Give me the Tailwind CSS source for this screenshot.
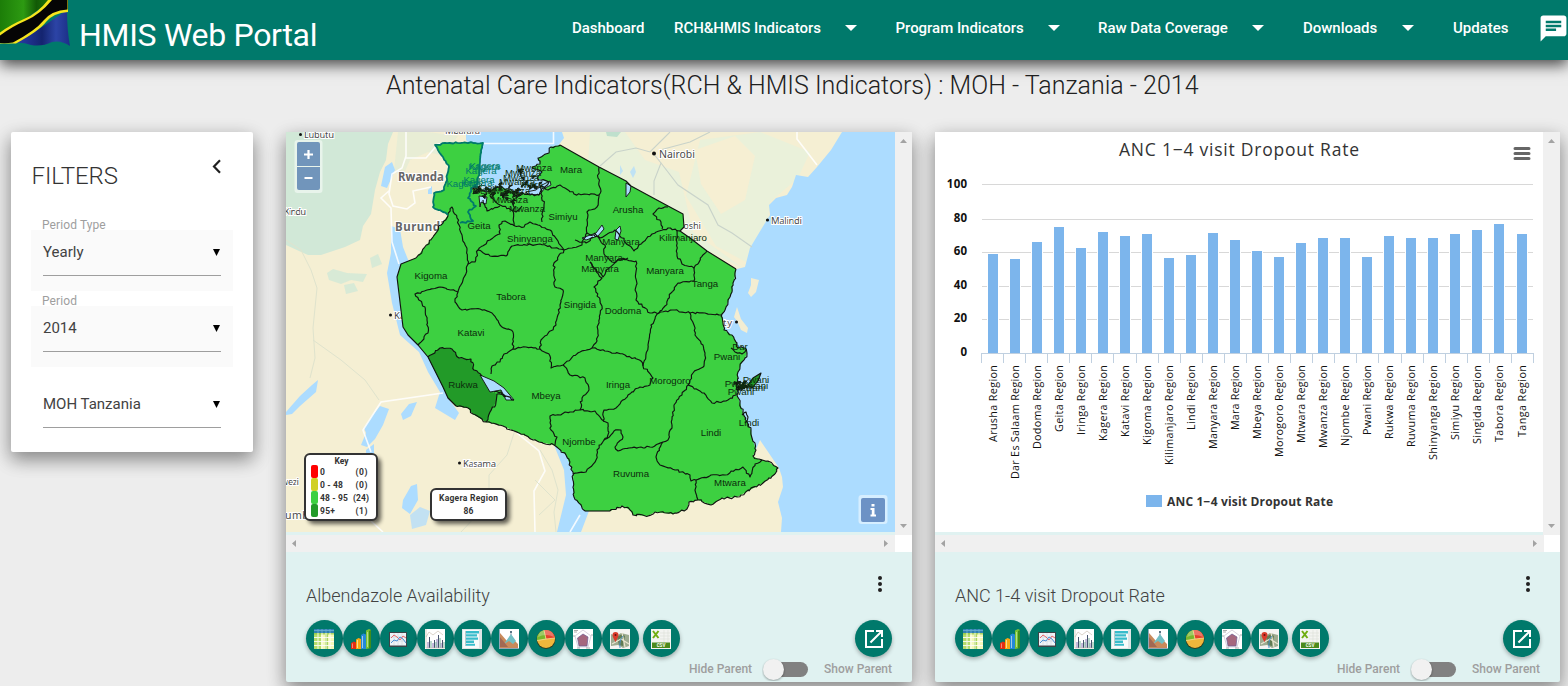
<!DOCTYPE html>
<html lang="en">
<head>
<meta charset="utf-8">
<title>HMIS Web Portal</title>
<script src="https://cdn.jsdelivr.net/npm/@tailwindcss/browser@4"></script>
</head>
<body class="h-[686px] w-[1568px] overflow-hidden bg-[#ededed] font-['Roboto',sans-serif] text-[#212121]">

<svg class="absolute size-0">
  <defs>
    <linearGradient id="flagGreen" x1="0" x2="1"><stop offset="0" stop-color="#1c7d08"/><stop offset=".45" stop-color="#2d9a12"/><stop offset=".7" stop-color="#125a06"/><stop offset="1" stop-color="#1f7a0c"/></linearGradient>
    <linearGradient id="flagBlue" x1="0" x2="1"><stop offset="0" stop-color="#2a3fae"/><stop offset=".5" stop-color="#14246f"/><stop offset=".75" stop-color="#2c44a6"/><stop offset="1" stop-color="#1b2f86"/></linearGradient>
    <symbol id="i-table" viewBox="0 0 20 20"><rect width="20" height="20" fill="#fff"/><path fill="#2f7fb0" d="M0 0h20v4H0z"/><path fill="#b5dc6a" d="M0 4h7v16H0z"/><path fill="#f3f8b8" d="M7 4h13v16H7z"/><path fill="#8cc63f" d="M11 4h3v16h-3zM0 4h20v1.500H0z" opacity=".7"/><path stroke="#fff" stroke-width="1" d="M0 8.500h20M0 12.500h20M0 16.500h20M4 4v16M8 4v16M12 4v16M16 4v16" opacity=".85"/><path stroke="#6cb0d4" stroke-width=".8" d="M0 1.500h20M4 0v4M8 0v4M12 0v4M16 0v4"/></symbol>
    <symbol id="i-bars" viewBox="0 0 20 20"><path fill="#e52b12" d="M0 14l3-1.500 2 1V20H0z"/><path fill="#f7a714" d="M5 10.500L7.500 9l2.500 1V20H5z"/><path fill="#2389d8" d="M10 6l2.500-1.500L15 5.500V20h-5z"/><path fill="#7cc234" d="M15 1.500L18 0l2 1v18l-5 1z"/><path fill="#3f8c1c" d="M18 2l2-1v18l-2 .500z"/><path fill="#fff" d="M6 11h1v8H6zM11 7h1v12h-1zM16 3h.8v15H16zM1 14.500h.8V19H1z" opacity=".55"/></symbol>
    <symbol id="i-line" viewBox="0 0 20 20"><rect x="1" y="3" width="18" height="15" fill="#3b4448"/><rect x="2" y="4" width="16" height="12.500" fill="#eef3f7"/><path stroke="#c5ced4" stroke-width=".5" d="M2 8h16M2 12h16M6 4v12M10 4v12M14 4v12"/><path fill="none" stroke="#e66" stroke-width="1" d="M3 9l3-3 3 2 3 3 3-4 3 2"/><path fill="none" stroke="#4d92d6" stroke-width="1" d="M3 14l3-3 3 1 3-4 3 2 3 4"/></symbol>
    <symbol id="i-multi" viewBox="0 0 20 20"><rect width="20" height="20" fill="#fff"/><path stroke="#47546e" stroke-width="1" d="M4.500 8v11M9.500 11v8M13.500 6v13M17.500 11v8"/><path stroke="#8a79b8" stroke-width="1" d="M3 13v6M8 14v5M12 10v9M16 14v5"/><path stroke="#78b39a" stroke-width="1" d="M6 12v7M11 13v6M15 9v10M19 13v6"/><path fill="none" stroke="#c1b7a6" stroke-width=".6" d="M1 8l3-5 4 3 5-4 5 4M1 0v19h19"/></symbol>
    <symbol id="i-hbar" viewBox="0 0 20 20"><rect width="20" height="20" fill="#dfe5e6"/><rect x="1" y="1" width="16" height="18" fill="#f6fafa"/><path fill="#38bccb" d="M4 2h13v2.400H4zM4 5.200h11v2.400H4zM4 8.400h12v2.400H4zM4 11.600h8v2.400H4zM4 14.800h9v2H4z"/><path stroke="#9fb1b5" d="M3.500 2v15" stroke-width=".7"/></symbol>
    <symbol id="i-area" viewBox="0 0 20 20"><rect width="20" height="20" fill="#fff"/><path fill="#c98a5b" d="M1 4l7 8 4-4 7 7v4H1z"/><path fill="#71bfc4" d="M5 15l7-10 5 7-3 3-4-3z"/><path fill="#a26954" d="M1 8l8 10h10H1z"/><path fill="none" stroke="#4b6a86" stroke-width=".6" d="M12 2v4M.5 0v19.500H20"/><circle cx="12" cy="3" r="1" fill="#34576b"/></symbol>
    <symbol id="i-pie" viewBox="0 0 20 20"><circle cx="10" cy="10.500" r="9.500" fill="#2e3d20"/><circle cx="10" cy="10" r="9" fill="#efb73c"/><path fill="#e5412b" d="M10 10L8 1.200A9 9 0 0 1 19 9z"/><path fill="#79b72c" d="M10 10l-9 1.500A9 9 0 0 1 8 1.200z"/><path fill="#fff" opacity=".28" d="M2 8a8 7 0 0 1 16 0q-8-4-16 0z"/><path fill="none" stroke="#fce7a0" stroke-width=".7" d="M10 10l9-1M10 10l-9 1.500M10 10L8 1.200"/></symbol>
    <symbol id="i-radar" viewBox="0 0 20 20"><rect width="20" height="20" fill="#fff"/><path fill="#fff" stroke="#bcb4c8" stroke-width=".6" d="M10 1l8 6-3 11H5L2 7z"/><path fill="#a5677e" stroke="#6c5b92" stroke-width=".7" d="M10 5l5 3-1 9H6L4.500 9z"/><path stroke="#888" stroke-width=".7" d="M1 1.500h4M1 3h3M4 19h3M13 19h4M18 6h2M0 7h2"/></symbol>
    <symbol id="i-map" viewBox="0 0 20 20"><rect width="20" height="20" fill="#f4f4f2"/><path fill="#9dab90" d="M1 5l5 2 5-3 8 2v11l-6 2-5-3-7 1z"/><path fill="#617b52" d="M7 8l5-3 3 2-2 10-4-1z"/><path stroke="#e9e4cf" stroke-width="1.200" fill="none" d="M2 15l9-5 8 5M12 4l3 14"/><path stroke="#4f94c7" stroke-width="1" fill="none" d="M10 19q-1-8 3-12"/><path fill="#da3b2b" d="M5.500 3a3 3 0 0 1 3 3q0 2-3 7-3-5-3-7a3 3 0 0 1 3-3z"/><circle cx="5.500" cy="6" r="1" fill="#611"/></symbol>
    <symbol id="i-csv" viewBox="0 0 20 20"><rect width="20" height="20" fill="#f3f4f1"/><path stroke="#dcdfd6" stroke-width=".6" d="M9 4h10M9 7h10M9 10h10M13 1v12M17 1v12"/><path stroke="#6fae10" stroke-width="2" d="M2 2l5.500 7M7.500 2L2 9"/><path fill="#4b8a1c" d="M1 13.500h18V19H1z"/><text x="10" y="18" font-family="Roboto" font-weight="700" font-size="4.500" fill="#fff" text-anchor="middle">CSV</text></symbol>
    <symbol id="i-open" viewBox="0 0 24 24"><path fill="#fff" d="M19 19H5V5h7V3H3v18h18v-9h-2v7zM14 3v2h3.590l-9.830 9.830 1.410 1.410L19 6.410V10h2V3h-7z"/></symbol>
  </defs>
</svg>

<header class="relative z-10 flex h-[60px] items-start bg-[#00796b] text-white shadow-[0_5px_14px_0_rgba(0,0,0,0.7)]">
  <svg class="h-[60px] w-[79px] shrink-0" viewBox="0 0 79 60">
    <path fill="url(#flagGreen)" d="M0 0h52L0 37z"/>
    <path fill="url(#flagBlue)" d="M14 43L42 27 67 10q0 20 3 36-9-6-18-4-10 5-21 3-8-3-17-2z"/>
    <path fill="#f5e51c" d="M0 32.500Q10 25 24 19T48 0h20v12q-15 1-22 10T16 43.500H0z"/>
    <path fill="#050505" d="M0 35.500Q12 26.500 26 20.500T52 0h15.500v9.500q-16 1-24 11T13 42.500q-7 1-13 .5z"/>
  </svg>
  <h1 class="w-[493px] shrink-0 pt-[15px] text-[32px] leading-[40px] whitespace-nowrap tracking-[-0.3px]">HMIS Web Portal</h1>
  <nav class="flex h-[56px] shrink-0 items-center text-[15px] font-medium tracking-[-0.03px] whitespace-nowrap">
    <span class="w-[102px]">Dashboard</span>
    <span class="w-[171px]">RCH&amp;HMIS Indicators</span>
    <svg class="mr-[38.500px] h-[6px] w-[12px]" viewBox="0 0 12 6"><path fill="#fff" d="M0 0h12L6 6z"/></svg>
    <span class="w-[152px]">Program Indicators</span>
    <svg class="mr-[38.500px] h-[6px] w-[12px]" viewBox="0 0 12 6"><path fill="#fff" d="M0 0h12L6 6z"/></svg>
    <span class="w-[154px]">Raw Data Coverage</span>
    <svg class="mr-[39px] h-[6px] w-[12px]" viewBox="0 0 12 6"><path fill="#fff" d="M0 0h12L6 6z"/></svg>
    <span class="w-[99px]">Downloads</span>
    <svg class="mr-[39px] h-[6px] w-[12px]" viewBox="0 0 12 6"><path fill="#fff" d="M0 0h12L6 6z"/></svg>
    <span class="w-[85px]">Updates</span>
    <svg class="h-[31px] w-[31px]" viewBox="0 0 24 24"><path fill="#fff" d="M20 2H4c-1.100 0-1.990.9-1.990 2L2 22l4-4h14c1.100 0 2-.9 2-2V4c0-1.100-.9-2-2-2zM6 9h12v2H6V9zm8 5H6v-2h8v2zm4-6H6V6h12v2z"/></svg>
  </nav>
</header>

<h2 class="mt-[6px] ml-[386px] h-[40px] text-[25px] leading-[40px] font-light whitespace-nowrap">Antenatal Care Indicators(RCH &amp; HMIS Indicators) : MOH - Tanzania - 2014</h2>

<main class="mt-[26px] flex items-start">
  <aside class="ml-[11px] h-[320px] w-[242px] shrink-0 rounded-[2px] bg-white px-[20px] shadow-[0_8px_17px_0_rgba(0,0,0,0.25),0_6px_20px_0_rgba(0,0,0,0.24)]">
    <div class="flex h-[86px] items-start justify-between">
      <h3 class="pt-[28px] pl-[0.500px] text-[24px] leading-[32px] font-light tracking-[-0.05px] text-[#333]">FILTERS</h3>
      <svg class="mt-[27px] mr-[12px] h-[15px] w-[9px]" viewBox="0 0 9 15"><path d="M8 1.200L2 7.500l6 6.300" fill="none" stroke="#212121" stroke-width="2.200"/></svg>
    </div>
    <div class="h-[12px] pl-[11px] text-[12px] leading-[14px] tracking-[0.1px] text-[#9e9e9e]"><span class="relative">Period Type</span></div>
    <div class="h-[61px] w-[202px] bg-[#fafafa] px-[12px]">
      <div class="flex h-[46px] items-center justify-between border-b border-[#9e9e9e] text-[15px] text-[#424242]"><span>Yearly</span><svg class="mr-[1.500px] h-[7px] w-[7px]" viewBox="0 0 7 7"><path d="M0 0h7L3.500 7z"/></svg></div>
    </div>
    <div class="h-[15px] pt-[3px] pl-[11px] text-[12px] leading-[14px] tracking-[0.1px] text-[#9e9e9e]"><span class="relative">Period</span></div>
    <div class="h-[61px] w-[202px] bg-[#fafafa] px-[12px]">
      <div class="flex h-[46px] items-center justify-between border-b border-[#9e9e9e] text-[15px] text-[#424242]"><span>2014</span><svg class="mr-[1.500px] h-[7px] w-[7px]" viewBox="0 0 7 7"><path d="M0 0h7L3.500 7z"/></svg></div>
    </div>
    <div class="mt-[15px] w-[202px] px-[12px]">
      <div class="flex h-[46px] items-center justify-between border-b border-[#9e9e9e] text-[15px] text-[#424242]"><span>MOH Tanzania</span><svg class="mr-[1.500px] h-[7px] w-[7px]" viewBox="0 0 7 7"><path d="M0 0h7L3.500 7z"/></svg></div>
    </div>
  </aside>

  <!-- Map card -->
  <section class="ml-[33px] h-[550px] w-[626px] shrink-0 overflow-visible rounded-[2px] bg-[#e0f2f1] shadow-[0_8px_17px_0_rgba(0,0,0,0.25),0_6px_20px_0_rgba(0,0,0,0.24)]">
    <div class="flex h-[403px]">
      <svg class="h-[400px] w-[609px] shrink-0" viewBox="286 132 609 400" id="map">
        <rect x="286" y="132" width="609" height="400" fill="#f5efd3"/>
        <g id="terrain">
          <path fill="#d1e8d7" d="M286 132h107l-5 12-2 16-6 12-5 18-4 24-8 12-3 14-15 7-24 8-13 0-9-4-13-6z"/>
          <path fill="#d1e8d7" d="M327 273l6-4 14 4 20 1-4 8-12-2-10 4-12-4zM344 285l10-2 4 8-12 3zM370 258l8-4 4 10-10 4z" opacity=".8"/>
          <path fill="#e2edd5" d="M398 132h30l30 4-14 20-16-4-18 8-8 18-8-8z" opacity=".7"/>
          <path fill="#eaf1da" d="M590 132h35l20 28 34 12 14 60 50 36-45-22-60-42-50-40z"/>
          <path fill="#eaf1da" d="M700 140l60-8 50 20-12 26-28 24-4 30-20 30-30-16-30-50z"/>
          <path fill="#f6efd3" d="M695 150l40-14 20 20-10 44-24 14-20-30z"/>
          <path fill="#bfe0cd" d="M606 132h15l-4 5-10-1z"/>
        </g>
        <g fill="#acdcff">
          <path d="M466 132h96l2 6-14 18 8 28-14 14-60 2-6-46-12-14z"/>
          <path d="M842 132l-11 18-14 17-9 10-12-2-4 12-5 8-11 3-7 7 1 10-8 13-12 20-5 19-8 2-3 2-3 7-8 35-5 6 1 12 12 14 8 14-5 18-3 15 0 24 10 34 6 20L760 440 779 468 782 477 783 487 778 502 782 518 781 532H895V132z"/>
          <path d="M391 226l9 3 3 18 6 15-10 6-2 10 6 50 14 16 12 14 22 44 8 11-4 7-20-12 5-16-12-20-9-20-19-17-8-32-5-30 4-20z"/>
          <path d="M385 167l7-5 3 8-8 18-6-2zM428 190l4-4v8h-4z"/>
          <path d="M554 445l12 9 8 18 1 25 14 14-8 21h-24l9-37-2-25z"/>
          <path d="M286 412l14-16 12-11 6-5-2 12-16 14-8 8-6 1zM364 428l8-12 8-10 9 3-6 16-8 14-8 8-6-2 5-12zM401 414l8-10 8-2-6 14-8 4zM366 450l8-6v12l-8-2zM403 500l8-14 6-2 1 16-8 14-8-6z"/>
          <path d="M410 515l10-8 10 4-4 14-14 4zM630 172l4-6 2 6-3 6zM620 165l3 6-3 4z" opacity=".7"/>
        </g>
        <g fill="#f3edd2"><path d="M751 278l8 2-3 12-5 5-3-4 3-8zM737 307l4 12 7 9-1 5-6-3-4-9-3-4z"/></g>
        <g fill="none" stroke="#fff" stroke-width="1.600" opacity=".85">
          <path d="M483 143.500h70.500V132M406 132v24l-4 12-10 6-3 20 4 12 14 3 8-6-2-12 18-4M390 190l-9 8 10 10 1 34 7 22M406 158l20 0 12-14 10-1M797 132v7l20 26"/>
          <path d="M443 393l-62 9-18 28 8 22M517 433l22 18 6 20-11 20 1 41M371 521l12 11M580 515l-10 17"/>
        </g>
        <g fill="none" stroke="#dfe3cd" stroke-width="1">
          <path d="M286 240l15 10 10 20 6 18-4 40 2 30-5 20M313 340l28 20 24 20 14 20M515 430l-8 25-18 20 0 20-12 20-16 17M540 450l12 20 6 20-4 22 2 20M535 480l20 20-16 15"/>
        </g>
        <g fill="none" stroke="#c9d3ca" stroke-width="1.100">
          <path d="M653 153l8 10-7 18v14M661 163l17 22 30 20 10 20 14 8 20 14M600 166l16-14 20-4 14 4 12-12 8-8M660 150l30-8 20-10"/>
        </g>
        <g font-family="'Noto Sans',sans-serif" fill="#4a4a4a" stroke="#fff" stroke-width="2" paint-order="stroke">
          <text x="304" y="138" font-size="9.500" textLength="30">Lubutu</text>
          <text x="445" y="133.500" font-size="9.500" textLength="35">Mbarara</text>
          <text x="284" y="215" font-size="9.500" textLength="22">Kindu</text>
          <text x="398" y="181" font-size="11.500" font-weight="700" fill="#666" textLength="46">Rwanda</text>
          <text x="395" y="231" font-size="11.500" font-weight="700" fill="#666" textLength="49">Burundi</text>
          <text x="659" y="158" font-size="10.500" textLength="36">Nairobi</text>
          <text x="771" y="224" font-size="9.500" textLength="31">Malindi</text>
          <text x="675" y="229" font-size="9.500" textLength="26">Moshi</text>
          <text x="394" y="319" font-size="9.500">Ka</text>
          <text x="723" y="326" font-size="9.500" textLength="9">ty</text>
          <text x="463" y="467" font-size="9.500" textLength="33">Kasama</text>
          <text x="281" y="485" font-size="9.500" textLength="18">wezi</text>
          <text x="285" y="519" font-size="10.500" textLength="46">umbashi</text>
        </g>
        <g fill="#111"><circle cx="300.500" cy="134.500" r="1.500"/><circle cx="654" cy="153.500" r="2"/><circle cx="767.500" cy="220" r="1.600"/><circle cx="390.500" cy="315" r="1.500"/><circle cx="736.500" cy="322" r="1.500"/><circle cx="459.500" cy="463" r="1.500"/></g>
        <path id="land" fill="#3dd041"/>
        <path fill="#229a28" d="M428 357L440 348 452 349 459 358 471 359 474 370 482 376 490 391 497 394 496 402 490 412 486 422 473 414 468 408 456 406 448 398 443 387z"/>
        <g fill="#acdcff" stroke="#111" stroke-width=".9">
          <path d="M480 375l14 6 10 7 10 12-8 0-5-10-11 2z"/>
          <path d="M582 238l14-5 6-8 2 4-6 7-12 4z"/>
          <path d="M615 239l1-9 4-4 1 5-3 9zM626 183l5 3-1 6-4 5z"/>
          <path d="M526 192l10-2 6-5 8-4 1 4-6 3-6 7-11-1z"/>
          <path d="M479 196l8 1-1 7-5-2-1 5z"/>
        </g>
        <g id="borders" fill="none" stroke="#101510" stroke-width="1.150" stroke-linejoin="round"></g>
        <g id="labels" font-family="'Liberation Sans',Arial,sans-serif" font-size="9.700" fill="#0c2d0c" text-anchor="middle"></g>
        <rect x="294.500" y="140" width="28" height="53" rx="3" fill="#fff" opacity=".5"/>
        <path fill="#7195bb" d="M297 144q0-2 2-2h19q2 0 2 2v22h-23zM297 167h23v21q0 2-2 2h-19q-2 0-2-2z"/>
        <path stroke="#fff" stroke-width="2.200" d="M304 154.500h9M308.500 150v9M304.500 178h8"/>
        <rect x="858.500" y="495" width="29" height="29" rx="3" fill="#fff" opacity=".5"/>
        <rect x="861" y="498" width="24" height="24" rx="2" fill="#6c92c5"/>
        <path fill="#fff" d="M871.500 504h3v2.500h-3zM870.500 508h4v6.500h1.500v2h-5.500v-2h1.300V510h-1.300z"/>
        <g font-family="Roboto,sans-serif" font-weight="700" font-size="8.500" fill="#333">
          <g fill="#000" opacity=".6"><rect x="308" y="457" width="73" height="67" rx="6" filter="blur(2px)"/><rect x="434" y="492" width="76" height="32" rx="6" filter="blur(2px)"/></g>
          <rect x="305" y="454" width="72" height="66" rx="5" fill="#fff" stroke="#333" stroke-width="2"/>
          <rect x="431" y="489" width="75" height="31" rx="5" fill="#fff" stroke="#333" stroke-width="2"/>
          <text x="341.500" y="464" text-anchor="middle">Key</text>
          <rect x="311" y="465" width="7" height="13" rx="2" fill="#f00"/><rect x="311" y="478" width="7" height="13" rx="2" fill="#d0d023"/><rect x="311" y="491" width="7" height="13" rx="2" fill="#3dd041"/><rect x="311" y="504" width="7" height="13" rx="2" fill="#229a28"/>
          <text x="320" y="475">0</text><text x="320" y="488" textLength="23">0 - 48</text><text x="320" y="501" textLength="28">48 - 95</text><text x="320" y="514" textLength="15">95+</text>
          <text x="355.500" y="475" textLength="12">(0)</text><text x="355.500" y="488" textLength="12">(0)</text><text x="353" y="501" textLength="16">(24)</text><text x="355.500" y="514" textLength="12">(1)</text>
          <text x="439" y="501" textLength="59">Kagera Region</text><text x="468.500" y="514" text-anchor="middle">86</text>
        </g>
      </svg>
      <div class="flex w-[17px] flex-col items-center justify-between bg-[#f0f0f0] pt-[7px] pb-[7px]">
        <svg class="h-[4px] w-[7px]" viewBox="0 0 7 4"><path fill="#a3a3a3" d="M0 4h7L3.500 0z"/></svg>
        <svg class="h-[4px] w-[7px]" viewBox="0 0 7 4"><path fill="#a3a3a3" d="M0 0h7L3.500 4z"/></svg>
      </div>
    </div>
    <div class="flex h-[17px]">
      <div class="flex w-[609px] items-center justify-between bg-[#f0f0f0] px-[6px]">
        <svg class="h-[7px] w-[4px]" viewBox="0 0 4 7"><path fill="#a3a3a3" d="M4 0v7L0 3.500z"/></svg>
        <svg class="mr-[1px] h-[7px] w-[4px]" viewBox="0 0 4 7"><path fill="#a3a3a3" d="M0 0v7l4-3.500z"/></svg>
      </div>
      <div class="w-[17px] bg-white"></div>
    </div>
    <div class="h-[130px] pt-[24px] pl-[20px]">
      <div class="flex h-[44px] items-start justify-between pr-[30px]">
        <h4 class="pt-[6px] text-[18px] leading-[28px] font-light text-[#424242]">Albendazole Availability</h4>
        <svg class="h-[16px] w-[4px]" viewBox="0 0 4 16"><g fill="#212121"><circle cx="2" cy="2" r="2"/><circle cx="2" cy="8" r="2"/><circle cx="2" cy="14" r="2"/></g></svg>
      </div>
      <div class="tools flex h-[37px] pr-[20px]"></div>
      <div class="flex h-[24px] items-center pr-[20px] text-[12px] font-medium text-[#9e9e9e]">
        <span class="ml-auto">Hide Parent</span>
        <svg class="mr-[12px] ml-[10px] h-[24px] w-[50px]" viewBox="0 0 50 24"><rect x="9" y="5" width="37" height="15" rx="7.500" fill="#818181"/><circle cx="11.500" cy="13.500" r="10.500" fill="#000" opacity=".35" filter="blur(1px)"/><circle cx="11.500" cy="12.500" r="10.500" fill="#f1f1f1"/></svg>
        <span>Show Parent</span>
      </div>
    </div>
  </section>

  <!-- Chart card -->
  <section class="ml-[23px] h-[550px] w-[625px] shrink-0 rounded-[2px] bg-[#e0f2f1] shadow-[0_8px_17px_0_rgba(0,0,0,0.25),0_6px_20px_0_rgba(0,0,0,0.24)]">
    <div class="flex h-[403px]">
      <svg class="h-[400px] w-[608px] shrink-0 bg-white" viewBox="935 132 608 400" font-family="'Open Sans','Noto Sans',sans-serif">
        <text x="1119" y="156" font-size="17.500" fill="#333" textLength="240">ANC 1−4 visit Dropout Rate</text>
        <g stroke="#666" stroke-width="3" stroke-linecap="round"><path d="M1515 148.500h14M1515 153.500h14M1515 158.500h14"/></g>
        <g id="chart"></g>
        <rect x="1146" y="495" width="16" height="12" fill="#7cb5ec"/>
        <text x="1167" y="506" font-size="12" font-weight="700" fill="#333" textLength="166">ANC 1−4 visit Dropout Rate</text>
      </svg>
      <div class="flex w-[17px] flex-col items-center justify-between bg-[#f0f0f0] pt-[7px] pb-[7px]">
        <svg class="h-[4px] w-[7px]" viewBox="0 0 7 4"><path fill="#a3a3a3" d="M0 4h7L3.500 0z"/></svg>
        <svg class="h-[4px] w-[7px]" viewBox="0 0 7 4"><path fill="#a3a3a3" d="M0 0h7L3.500 4z"/></svg>
      </div>
    </div>
    <div class="flex h-[17px]">
      <div class="flex w-[609px] items-center justify-between bg-[#f0f0f0] px-[6px]">
        <svg class="h-[7px] w-[4px]" viewBox="0 0 4 7"><path fill="#a3a3a3" d="M4 0v7L0 3.500z"/></svg>
        <svg class="mr-[1px] h-[7px] w-[4px]" viewBox="0 0 4 7"><path fill="#a3a3a3" d="M0 0v7l4-3.500z"/></svg>
      </div>
      <div class="w-[16px] bg-white"></div>
    </div>
    <div class="h-[130px] pt-[24px] pl-[20px]">
      <div class="flex h-[44px] items-start justify-between pr-[30px]">
        <h4 class="pt-[6px] text-[18px] leading-[28px] font-light text-[#424242]">ANC 1-4 visit Dropout Rate</h4>
        <svg class="h-[16px] w-[4px]" viewBox="0 0 4 16"><g fill="#212121"><circle cx="2" cy="2" r="2"/><circle cx="2" cy="8" r="2"/><circle cx="2" cy="14" r="2"/></g></svg>
      </div>
      <div class="tools flex h-[37px] pr-[20px]"></div>
      <div class="flex h-[24px] items-center pr-[20px] text-[12px] font-medium text-[#9e9e9e]">
        <span class="ml-auto">Hide Parent</span>
        <svg class="mr-[12px] ml-[10px] h-[24px] w-[50px]" viewBox="0 0 50 24"><rect x="9" y="5" width="37" height="15" rx="7.500" fill="#818181"/><circle cx="11.500" cy="13.500" r="10.500" fill="#000" opacity=".35" filter="blur(1px)"/><circle cx="11.500" cy="12.500" r="10.500" fill="#f1f1f1"/></svg>
        <span>Show Parent</span>
      </div>
    </div>
  </section>
</main>

<script>
  // Round tool buttons
  const icons = ['table', 'bars', 'line', 'multi', 'hbar', 'area', 'pie', 'radar', 'map', 'csv'];
  document.querySelectorAll('.tools').forEach(row => {
    row.innerHTML = icons.map(n => `<button class="flex size-[37px] shrink-0 items-center justify-center rounded-full bg-[#00796b] pr-px shadow-[0_2px_4px_rgba(0,0,0,0.3)] ${n === 'csv' ? 'ml-[4px]' : ''}"><svg class="size-[20px]"><use href="#i-${n}"/></svg></button>`).join('')
      + '<button class="ml-auto flex size-[37px] items-center justify-center rounded-full bg-[#00796b] shadow-[0_2px_4px_rgba(0,0,0,0.3)]"><svg class="size-[24px]"><use href="#i-open"/></svg></button>';
  });

  // Column chart: [name, bar top, label length]
  const data = [['Arusha',254,77],['Dar Es Salaam',259,114],['Dodoma',242,84],['Geita',227,67],['Iringa',248,70],['Kagera',232,76],['Katavi',236,72],['Kigoma',234,80],['Kilimanjaro',258,100],['Lindi',255,65],['Manyara',233,84],['Mara',240,65],['Mbeya',251,74],['Morogoro',257,92],['Mtwara',243,78],['Mwanza',238,83],['Njombe',238,81],['Pwani',257,70],['Rukwa',236,74],['Ruvuma',238,82],['Shinyanga',238,95],['Simiyu',234,75],['Singida',230,79],['Tabora',224,77],['Tanga',234,72]];
  let out = '';
  [[100,184.5],[80,219.5],[60,252.5],[40,286.5],[20,319.5],[0,353.5]].forEach(([v, y], i) => {
    if (v) out += `<path d="M982 ${y}h551" stroke="#d8d8d8"/>`;
    out += `<text x="967.500" y="${188 + i * 33.600}" font-size="11.500" font-weight="700" fill="#111" text-anchor="end" letter-spacing=".3">${v}</text>`;
  });
  out += '<path d="M981 353.500h553" stroke="#c0d0e0"/>';
  data.forEach(([n, top, len], i) => {
    const x = 988 + Math.round(i * 22.030 - .2);
    out += `<rect x="${x - 1}" y="${top - 1}" width="12" height="${353 - top + 1}" fill="#fff"/><rect x="${x}" y="${top}" width="10" height="${353 - top}" fill="#7cb5ec"/>`;
    out += `<text transform="translate(${x + 8.500} ${365 + len}) rotate(-90)" font-size="10.800" fill="#111" textLength="${len}">${n} Region</text>`;
  });
  for (let i = 0; i <= 25; i++) out += `<path d="M${Math.round(981 + i * 22.080) + .5} 353v10" stroke="#c0d0e0"/>`;
  document.getElementById('chart').innerHTML = out;

  // Region borders, roughened with a seeded random walk
  let seed = 11;
  const rnd = () => (seed = seed * 16807 % 2147483647) / 2147483647 - .5;
  const rough = (s, amp) => {
    const p = s.trim().split(/\s+/).map(q => q.split(',').map(Number));
    let d = 'M' + p[0];
    for (let i = 1; i < p.length; i++) {
      const [a, b] = p[i - 1], [c, e] = p[i], k = Math.max(1, Math.round(Math.hypot(c - a, e - b) / 2.5));
      for (let j = 1; j < k; j++) d += `L${(a + (c - a) * j / k + rnd() * amp).toFixed(1)},${(b + (e - b) * j / k + rnd() * amp).toFixed(1)}`;
      d += 'L' + p[i];
    }
    return d;
  };
  const northEast = '560,145 599,167 626,181 631,186 668,206 683,214 684,227 680,231 690,238 707,251 736,269';
  const coast = '736,269 735,276 733,283 732,292 728,302 725,310 722,314 723,323 724,330 732,335 737,343 738,348 745,348 747,353 745,358 742,362 738,372 738,385 737,395 740,403 743,413 747,422 751,430 752,438 756,450 753,456 758,459 767,461 778,468 775,474';
  const south = '775,474 763,483 737,497 722,498 711,505 698,500 689,502 687,509 673,514 655,512 648,516 633,515 630,510 622,506 610,511';
  const southWest = '585,511 574,497 573,472 566,455 554,445 539,442 519,433 503,426 486,422 473,414 468,408 456,406';
  const lakeSide = '456,406 448,398 443,387 428,357 418,345 408,335 403,327 397,277 401,264 416,258';
  const west = '416,258 424,248 433,237 441,225 448,215';
  const kagera = '448,215 443,212 433,207 434,193 444,190 449,167 443,157 435,145 445,143 483,143 480,162 478,183 471,188 468,198 476,206 468,212 473,221 460,223';
  const lake = '471,188 486,192 500,187 519,193 539,195 544,188 549,182 537,178 542,172 532,168 540,164 538,158 549,153 551,147 560,145';
  document.getElementById('land').setAttribute('d', 'M' + [northEast, coast, south, southWest, lakeSide, west, '443,212 433,207 434,193 444,190 449,167 443,157 435,145 445,143 483,143 480,162 478,183', lake].join(' ').replace(/ /g, 'L') + 'Z');
  const inner = [
    '599,167 598,178 601,191 599,195', '599,195 574,194 560,185 548,190 540,186', '599,195 597,207 587,212 587,233',
    '587,233 600,238 615,230 628,245 634,251 652,234 668,228 680,231',
    '662,229 661,222 653,214 659,208 668,207', '677,230 677,256 682,264 694,268 707,251', '694,268 694,281 678,283 671,293 665,306 659,313',
    '659,313 650,313 636,300 636,261 619,259 609,268 603,277 594,268 590,262', '587,233 582,245 564,250',
    '564,250 558,241 550,230 538,225 530,222 524,227 515,226 505,221 499,225 500,234 490,240 478,250 475,262 468,264',
    '478,250 490,256 506,256 512,246 540,244 564,250', '448,215 452,207 457,218 462,235 467,250 468,264',
    '468,264 463,280 458,292 455,302 462,310 480,309 492,313 500,325 513,332 513,349',
    '458,292 440,287 427,290 415,294 425,307 427,320 428,333 418,345',
    '564,250 554,263 555,287 563,290 560,305 556,325 541,340 540,349', '540,349 526,347 513,349 504,354 500,362 492,366 491,374',
    '540,349 550,356 551,368 563,365 580,352 592,348', '563,365 570,375 585,378 589,390 582,398 580,410',
    '590,262 602,278 594,287 602,306 598,325 597,341 592,348', '592,348 610,352 625,355 641,361 643,366',
    '659,313 651,325 648,345 643,366 653,378 650,385 640,387 628,395 616,408 604,410 603,421',
    '659,313 675,310 690,313 705,313 722,315', '690,313 694,325 695,335 703,345 705,353 704,366 693,373 688,385',
    '688,385 704,393 712,403 726,401 736,395', '688,385 682,395 674,405 672,425 668,440 663,442',
    '663,442 650,447 641,447 629,448 618,451 615,447 623,437 621,430 614,431 604,440 597,450 596,460 586,472 573,474',
    '603,421 608,423 608,438 604,440', '580,410 595,411 604,421', '580,410 570,412 550,416 551,430 557,437 555,445',
    '663,442 656,457 660,465 675,470 690,475 691,481 696,480 711,475 725,475 743,467 750,477 755,464 762,460', '696,480 695,490 698,500',
    '540,186 544,205 542,222', '514,200 514,226', '490,196 500,205 516,212 522,206', '483,200 487,211 500,206', '594,233 605,245 604,254 612,262 628,258',
    '428,357 440,348 452,349 459,358 471,359 474,370 482,376', '514,400 506,396 497,394 496,402 490,412 486,422', '494,392 501,392 506,397',
    '731,348 735,352 742,354 746,350', '742,415 746,412 748,417 745,423', '575,240 586,243 593,237'
  ];
  const straight = d => `<path d="M${d.replace(/ /g, 'L')}"/>`;
  let b = straight(northEast) + straight('610,511 585,511') + straight(lakeSide) + `<path d="${rough(southWest, 2)}"/>`;
  [coast, south, west, lake].forEach(s => b += `<path d="${rough(s, 2.6)}"/>`);
  inner.forEach(s => b += `<path d="${rough(s, 2)}"/>`);
  b += `<path stroke="#00796b" stroke-width="1.800" d="${rough(kagera, 2)}"/>`;
  // small island clusters
  const blob = (x, y, w, h, n) => { for (let i = 0; i < n; i++) { const cx = x + (rnd() + .5) * w, cy = y + (rnd() + .5) * h; b += `<path fill="#1c3c20" stroke-width="1" d="${rough(`${cx},${cy} ${cx + 3},${cy + rnd() * 5} ${cx + rnd() * 6},${cy + 3} ${cx},${cy}`, 2)}"/>`; } };
  blob(474, 184, 42, 12, 24); blob(518, 168, 22, 20, 12); blob(505, 186, 16, 16, 8); blob(733, 381, 20, 8, 16);
  b += '<path fill="#229a28" d="M748 385l5-7 8-5-3 8-6 7z"/>';
  document.getElementById('borders').innerHTML = b;

  const names = [['Mara',571,173],['Arusha',628,213],['Simiyu',563,220],['Geita',479,229],['Shinyanga',530,242],['Kigoma',431,279],['Tabora',511,300],['Katavi',471,336],['Rukwa',463,388],['Mbeya',546,399],['Njombe',579,445],['Ruvuma',631,477],['Mtwara',730,486],['Lindi',711,436],['Lindi',749,426],['Morogoro',670,384],['Iringa',618,388],['Singida',580,308],['Dodoma',623,314],['Manyara',665,274],['Manyara',621,245],['Manyara',604,261],['Manyara',600,272],['Kilimanjaro',683,241],['Tanga',705,287],['Pwani',727,360],['Dar',740,350],['Pwani',756,383],['Pwani',755,389],['Pwani',738,387],['Pwani',741,395],['Pwani',752,391],['Mwanza',534,171],['Mwanza',523,176],['Mwanza',521,181],['Mwanza',517,185],['Mara',532,188],['Mwanza',512,194],['Mwanza',510,203],['Mwanza',527,212],['Geita',491,191],['Geita',484,194]];
  const kg = [[484,170],[485,169],[481,174],[479,183],[477,186],[462,187]];
  document.getElementById('labels').innerHTML = names.map(([n, x, y]) => `<text x="${x}" y="${y}">${n}</text>`).join('')
    + kg.map(([x, y]) => `<text x="${x}" y="${y}" fill="#007a68">Kagera</text>`).join('');
</script>
</body>
</html>
